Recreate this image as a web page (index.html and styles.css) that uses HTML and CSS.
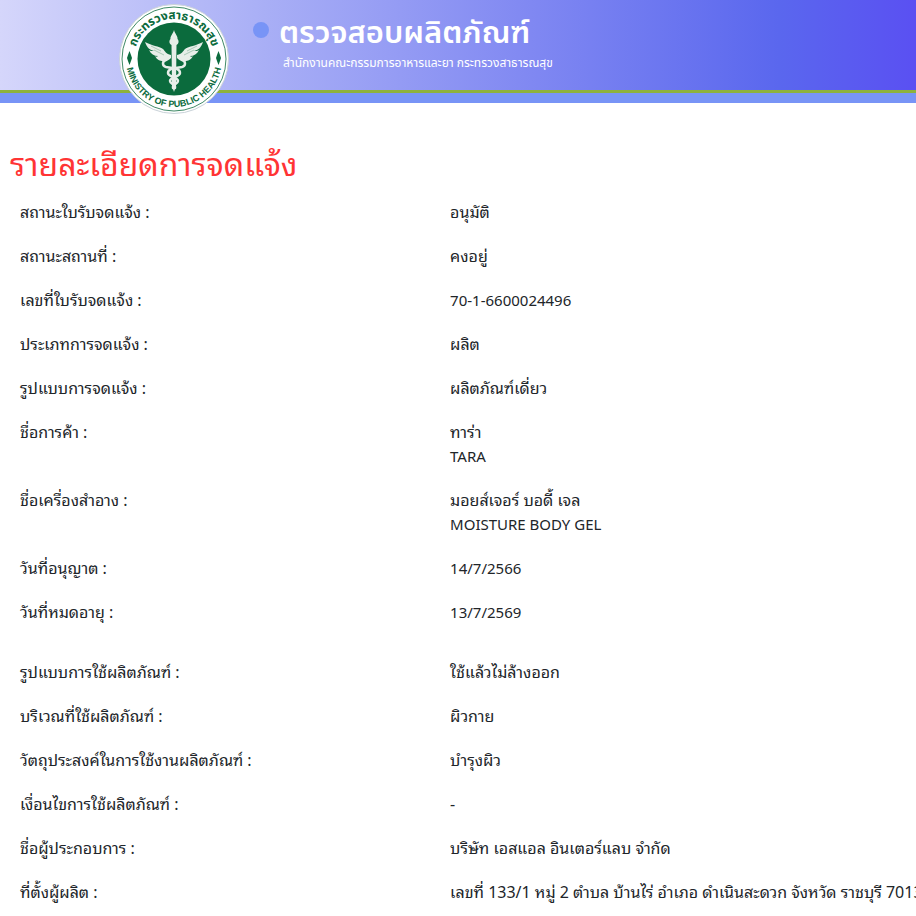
FILE: index.html
```html
<!DOCTYPE html>
<html lang="th">
<head>
<meta charset="utf-8">
<meta name="viewport" content="width=device-width, initial-scale=1">
<title>ตรวจสอบผลิตภัณฑ์</title>
<link rel="stylesheet" href="styles.css">
</head>
<body>
<header class="banner">
  <svg class="seal" viewBox="0 0 110 110" role="img" aria-label="กระทรวงสาธารณสุข">
    <defs>
      <path id="arc-top" d="M15 55a40 40 0 0 1 80 0"/>
      <path id="arc-bottom" d="M7 55a48 48 0 0 0 96 0"/>
    </defs>
    <circle cx="55" cy="55" r="54.500" fill="#fff" stroke="#c9d2d8"/>
    <circle cx="55" cy="55" r="52" fill="none" stroke="#3f8a66" stroke-width="1"/>
    <circle cx="55" cy="55" r="36.500" fill="#0b6b3d"/>
    <text class="seal-thai"><textPath href="#arc-top" startOffset="50%" text-anchor="middle">กระทรวงสาธารณสุข</textPath></text>
    <text class="seal-latin"><textPath href="#arc-bottom" startOffset="50%" text-anchor="middle">MINISTRY OF PUBLIC HEALTH</textPath></text>
    <path d="M10.500 47l1.500 4 1 3-1 3-1.500 4-1.500-4-1-3 1-3zM99.500 47l1.500 4 1 3-1 3-1.500 4-1.500-4-1-3 1-3z" fill="#0b6b3d"/>
    <g fill="#e7eee9">
      <path d="M55 26c1 4 4 6 3.500 9 2 2 1 5-1 6l-.5 41-2 6-2-6-.5-41c-2-1-3-4-1-6C51 32 54 30 55 26z"/>
      <path d="M52 51c-5-1-6-4-8-6-4-3-11-3-18-7 2 6 5 8 9 9-2 0-4 0-5-1 2 4 5 6 9 6-1 1-2 1-3 0 2 4 5 5 8 5 3 1 6-1 8-3zM58 51c5-1 6-4 8-6 4-3 11-3 18-7-2 6-5 8-9 9 2 0 4 0 5-1-2 4-5 6-9 6 1 1 2 1 3 0-2 4-5 5-8 5-3 1-6-1-8-3z"/>
    </g>
    <g fill="none" stroke="#e7eee9" stroke-width="2.500" stroke-linecap="round">
      <path d="M47 56c-4 1-4 6 0 7 7 1 14 1 14 6 0 4-10 4-10 8 0 3 6 3 5 7"/>
      <path d="M63 56c4 1 4 6 0 7-7 1-14 1-14 6 0 4 10 4 10 8 0 3-6 3-5 7"/>
    </g>
    <path d="M35 46l10 5M32 42l10 5M75 46l-10 5M78 42l-10 5" stroke="#8db9a1" stroke-width=".7"/>
  </svg>
  <span class="dot"></span>
  <div class="titles">
    <p class="title">ตรวจสอบผลิตภัณฑ์</p>
    <p class="subtitle">สำนักงานคณะกรรมการอาหารและยา กระทรวงสาธารณสุข</p>
  </div>
</header>
<main class="details">
  <h1 class="heading">รายละเอียดการจดแจ้ง</h1>
  <dl class="list">
    <div class="row"><dt>สถานะใบรับจดแจ้ง :</dt><dd>อนุมัติ</dd></div>
    <div class="row"><dt>สถานะสถานที่ :</dt><dd>คงอยู่</dd></div>
    <div class="row"><dt>เลขที่ใบรับจดแจ้ง :</dt><dd class="latin">70-1-6600024496</dd></div>
    <div class="row"><dt>ประเภทการจดแจ้ง :</dt><dd>ผลิต</dd></div>
    <div class="row"><dt>รูปแบบการจดแจ้ง :</dt><dd>ผลิตภัณฑ์เดี่ยว</dd></div>
    <div class="row"><dt>ชื่อการค้า :</dt><dd>ทาร่า<div class="latin">TARA</div></dd></div>
    <div class="row"><dt>ชื่อเครื่องสำอาง :</dt><dd>มอยส์เจอร์ บอดี้ เจล<div class="latin">MOISTURE BODY GEL</div></dd></div>
    <div class="row"><dt>วันที่อนุญาต :</dt><dd class="latin">14/7/2566</dd></div>
    <div class="row"><dt>วันที่หมดอายุ :</dt><dd class="latin">13/7/2569</dd></div>
  </dl>
  <dl class="list">
    <div class="row"><dt>รูปแบบการใช้ผลิตภัณฑ์ :</dt><dd>ใช้แล้วไม่ล้างออก</dd></div>
    <div class="row"><dt>บริเวณที่ใช้ผลิตภัณฑ์ :</dt><dd>ผิวกาย</dd></div>
    <div class="row"><dt>วัตถุประสงค์ในการใช้งานผลิตภัณฑ์ :</dt><dd>บำรุงผิว</dd></div>
    <div class="row"><dt>เงื่อนไขการใช้ผลิตภัณฑ์ :</dt><dd>-</dd></div>
    <div class="row"><dt>ชื่อผู้ประกอบการ :</dt><dd>บริษัท เอสแอล อินเตอร์แลบ จำกัด</dd></div>
    <div class="row"><dt>ที่ตั้งผู้ผลิต :</dt><dd>เลขที่ 133/1 หมู่ 2 ตำบล บ้านไร่ อำเภอ ดำเนินสะดวก จังหวัด ราชบุรี 70130</dd></div>
  </dl>
</main>
</body>
</html>
```
FILE: styles.css
```css
* {
  box-sizing: border-box;
}

body {
  margin: 0;
  overflow-x: hidden;
  background: #fff;
  color: #212529;
  font: 16px/24px "Noto Sans Thai Looped", "Noto Looped Thai", "Open Sans", "Noto Sans", sans-serif;
}

body::-webkit-scrollbar {
  display: none;
}

p,
h1,
dl,
dd {
  margin: 0;
}

.banner {
  display: flex;
  align-items: flex-start;
  height: 103px;
  padding-left: 119px;
  font-family: "Open Sans", "Noto Sans Thai", "Noto Sans", sans-serif;
  background:
    linear-gradient(#8db23c, #8db23c) 0 90px / 100% 3px no-repeat,
    linear-gradient(#7894f6, #7894f6) 0 93px / 100% 10px no-repeat,
    linear-gradient(90deg, #d5d6fb 0%, #aab0f6 28%, #8088f2 58%, #5a67ee 85%, #5a50f2 100%);
}

.seal {
  flex: none;
  width: 110px;
  height: 110px;
  margin-top: 4px;
}

.seal-thai {
  fill: #0b6b3d;
  font-size: 12px;
  font-weight: 700;
}

.seal-latin {
  fill: #0b6b3d;
  font: 700 9px "Liberation Sans", sans-serif;
}

.dot {
  flex: none;
  width: 16px;
  height: 16px;
  margin: 22px 10px 0 24px;
  border-radius: 50%;
  background: #7894f6;
}

.titles {
  padding-top: 11px;
  color: #fff;
  white-space: nowrap;
}

.title {
  font-size: 31px;
  line-height: 40px;
  font-weight: 600;
}

.subtitle {
  padding-left: 4px;
  font-size: 12px;
  line-height: 24px;
}

.heading {
  margin: 39px 0 17px 10px;
  color: #ff3434;
  font-size: 32px;
  line-height: 40px;
  font-weight: 400;
}

.list {
  margin-bottom: 16px;
  padding-left: 20px;
}

.list:last-child {
  margin-bottom: 0;
}

.row {
  display: grid;
  grid-template-columns: 48% 1fr;
  padding-bottom: 20px;
}

.row dt,
.row dd {
  white-space: nowrap;
}

.latin {
  font-size: 15px;
}
```
